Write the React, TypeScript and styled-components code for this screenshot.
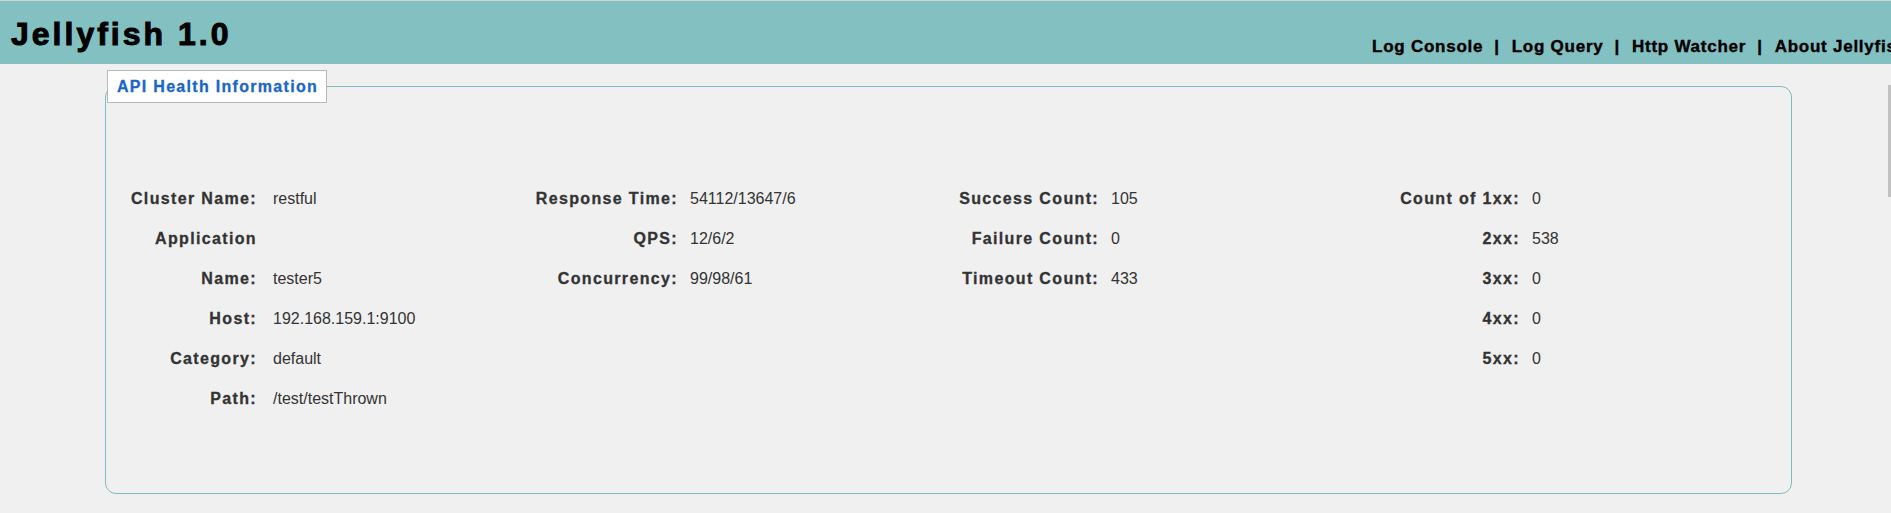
import React from 'react';
import styled, { createGlobalStyle } from 'styled-components';

const GlobalStyle = createGlobalStyle`
  html, body {
    margin: 0;
    padding: 0;
    background: #f0f0f0;
    overflow: hidden;
  }
  body {
    font-family: "Liberation Sans", Arial, sans-serif;
  }
`;

const Page = styled.div`
  position: relative;
  width: 1891px;
  height: 513px;
  overflow: hidden;
  background: #f0f0f0;
`;

const Header = styled.header`
  display: grid;
  grid-template-columns: 1361px max-content;
  height: 63px;
  border-top: 1px solid #cfd4d4;
  background: #83c0c2;
  padding-left: 11px;
  white-space: nowrap;
`;

const Title = styled.h1`
  margin: 15px 0 0;
  font-size: 32px;
  line-height: 36px;
  font-weight: 700;
  letter-spacing: 3px;
  color: #000;
  -webkit-text-stroke: 1px #000;
`;

const Nav = styled.nav`
  display: flex;
  align-items: baseline;
  margin-top: 37px;
  font-size: 17px;
  line-height: 18px;
  font-weight: 700;
  letter-spacing: 0.75px;
  color: #000;
  -webkit-text-stroke: 0.4px #000;
`;

const NavLink = styled.a`
  color: inherit;
  text-decoration: none;
`;

const Separator = styled.span`
  margin: 0 12px 0 11px;
`;

const ScrollThumb = styled.div`
  position: absolute;
  right: 0;
  top: 85px;
  width: 3px;
  height: 112px;
  background: #c1c1c1;
`;

const Panel = styled.fieldset`
  margin: 6px 99px 0 105px;
  padding: 0;
  min-width: 0;
  border: 1px solid #7ebdbe;
  border-radius: 11px;
`;

const Legend = styled.legend`
  margin-left: 1px;
  padding: 7px 8px 6px 9px;
  background: #fff;
  border: 1px solid #b9b9b9;
  color: #1a66c6;
  font-size: 16px;
  line-height: 18px;
  font-weight: 700;
  letter-spacing: 1.3px;
  -webkit-text-stroke: 0.3px #1a66c6;
`;

const Grid = styled.div`
  display: grid;
  grid-template-columns: repeat(4, 421px);
  align-items: start;
  padding: 76px 0 74px;
`;

const Column = styled.div`
  display: flex;
  flex-direction: column;
`;

const Row = styled.div<{ $gap: number }>`
  display: grid;
  grid-template-columns: 150px auto;
  column-gap: ${(p) => p.$gap}px;
  align-items: center;
  height: 40px;
`;

const Label = styled.span`
  margin-right: -1px;
  text-align: right;
  white-space: nowrap;
  font-size: 16px;
  line-height: 18px;
  font-weight: 700;
  letter-spacing: 1.35px;
  color: #333;
  -webkit-text-stroke: 0.3px #333;
`;

const Value = styled.span`
  white-space: nowrap;
  font-size: 16px;
  line-height: 18px;
  color: #333;
`;

type Item = [string, string];

const columns: { gap: number; items: Item[] }[] = [
  {
    gap: 17,
    items: [
      ['Cluster Name:', 'restful'],
      ['Application', ''],
      ['Name:', 'tester5'],
      ['Host:', '192.168.159.1:9100'],
      ['Category:', 'default'],
      ['Path:', '/test/testThrown'],
    ],
  },
  {
    gap: 13,
    items: [
      ['Response Time:', '54112/13647/6'],
      ['QPS:', '12/6/2'],
      ['Concurrency:', '99/98/61'],
    ],
  },
  {
    gap: 13,
    items: [
      ['Success Count:', '105'],
      ['Failure Count:', '0'],
      ['Timeout Count:', '433'],
    ],
  },
  {
    gap: 13,
    items: [
      ['Count of 1xx:', '0'],
      ['2xx:', '538'],
      ['3xx:', '0'],
      ['4xx:', '0'],
      ['5xx:', '0'],
    ],
  },
];

const links = ['Log Console', 'Log Query', 'Http Watcher', 'About Jellyfish'];

export default function App() {
  return (
    <Page>
      <GlobalStyle />
      <Header>
        <Title>Jellyfish 1.0</Title>
        <Nav>
          {links.map((l, i) => (
            <React.Fragment key={l}>
              {i > 0 && <Separator>|</Separator>}
              <NavLink href="#">{l}</NavLink>
            </React.Fragment>
          ))}
        </Nav>
      </Header>
      <Panel>
        <Legend>API Health Information</Legend>
        <Grid>
          {columns.map((c, ci) => (
            <Column key={ci}>
              {c.items.map(([k, v]) => (
                <Row key={k} $gap={c.gap}>
                  <Label>{k}</Label>
                  <Value>{v}</Value>
                </Row>
              ))}
            </Column>
          ))}
        </Grid>
      </Panel>
      <ScrollThumb />
    </Page>
  );
}
